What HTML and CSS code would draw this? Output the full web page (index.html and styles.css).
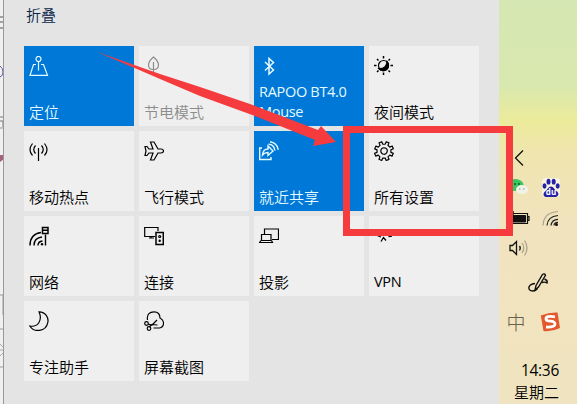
FILE: index.html
```
<!DOCTYPE html>
<html lang="zh-CN">
<head>
    <meta charset="UTF-8">
    <meta name="viewport" content="width=device-width, initial-scale=1.0">
    <title>操作中心</title>
    <link rel="stylesheet" href="styles.css">
</head>
<body>
    <div class="screen">
        <div class="window-edge">
            <svg width="5" height="404" viewBox="0 0 5 404" fill="none">
                <path d="M0 17h3M0 22h3M0 28h3" stroke="#555"/>
                <path d="M0 66q3 2 3 6t-3 5" stroke="#6a55a5"/>
                <path d="M0 117h3M0 121h3v6" stroke="#777"/>
                <path d="M0 128h3M0 295h3v20M0 329h3M0 367h3" stroke="#999"/>
                <path d="M0 155h4v4l-4 3z" fill="#a4627e"/>
                <path d="M0 344l3 3M0 350h3M0 356l3-3" stroke="#aaa"/>
            </svg>
        </div>
        <main class="panel">
            <a class="collapse">折叠</a>
            <div class="tiles">
                <div class="tile on">
                    <svg class="icon" viewBox="0 0 20 20"><circle cx="9.500" cy="3" r="2.500"/><path d="M9.500 5.500v9M7 8.500H4.500L1 19.300h17.500L14.500 8.500H12"/></svg>
                    <span>定位</span>
                </div>
                <div class="tile disabled">
                    <svg class="icon" viewBox="0 0 20 20"><path d="M9.500 1C6 4 4.500 6 4.500 9c0 3 2 4.500 5 4.500s5-1.500 5-4.500c0-3-1.500-5-5-8zM9.500 6v12"/></svg>
                    <span>节电模式</span>
                </div>
                <div class="tile on">
                    <svg class="icon" viewBox="0 0 20 20"><path d="M6 6l8.500 8-4.500 4V2.500l4.500 4L6 14.500" stroke-width="1.500"/></svg>
                    <span class="latin">RAPOO BT4.0<br>Mouse</span>
                </div>
                <div class="tile">
                    <svg class="icon" viewBox="0 0 20 20"><circle cx="9.500" cy="9.500" r="5"/><path d="M13 5.500a5.500 5.500 0 1 1-8.300 7.200C10 13 13 10 13 5.500z" fill="#000"/><path d="M9.500 0v2.500M9.500 16.500V19M0 9.500h2.500M16.500 9.500H19M3 3l1.500 1.500M14.500 14.500L16 16M3 16l1.500-1.500M14.500 4.500L16 3" stroke-width="1.500"/></svg>
                    <span>夜间模式</span>
                </div>
                <div class="tile">
                    <svg class="icon" viewBox="0 0 20 20"><path d="M9.500 7v13M3.500 2.500q-5 6.500 0 12M15.500 2.500q5 6.500 0 12M6.500 4.500q-3.500 4 0 8M12.500 4.500q3.500 4 0 8"/></svg>
                    <span>移动热点</span>
                </div>
                <div class="tile">
                    <svg class="icon" viewBox="0 0 20 20"><path d="M1 5.500h2L5 8h4L6.500 1H10l4 7h3q2.500 0 2.500 2T17 12h-3l-4 7H6.500L9 12H5l-2 2.500H1L2 10z"/></svg>
                    <span>飞行模式</span>
                </div>
                <div class="tile on">
                    <svg class="icon" viewBox="0 0 20 20"><path d="M3 7H.7v11.500H12V16M3.500 14Q4 8 9 8V5l5 5-5 4.500v-3q-3.500 0-5.500 2.500zM9.500 3.200q5.500 0 6.500 6.300M11 .8q7 1 8.300 8" stroke-width="1.400"/></svg>
                    <span>就近共享</span>
                </div>
                <div class="tile">
                    <svg class="icon" viewBox="0 0 20 20"><g transform="rotate(22.500 10 10)"><circle cx="10" cy="10" r="3.200"/><path d="M8.500 3.200V.6h3v2.600l2.300 1 1.900-1.900 2.100 2.100-1.900 1.900 1 2.300h2.600v3h-2.600l-1 2.300 1.900 1.900-2.100 2.100-1.900-1.900-2.300 1v2.600h-3V17l-2.300-1-1.900 1.900-2.100-2.100 1.900-1.900-1-2.300H.6v-3h2.600l1-2.300-1.900-1.900 2.100-2.100 1.900 1.900z" stroke-linejoin="round"/></g></svg>
                    <span>所有设置</span>
                </div>
                <div class="tile">
                    <svg class="icon" viewBox="0 0 20 20"><path d="M1 19.500C1 12 5 7.500 12 6.500M5 19.500c0-5 3-8 8-8.500M9 19.500q0-4 4.500-4.500M16.500 8.500v11" stroke-width="1.400"/><path d="M13.500 1.500h5.500v6h-5.500zM14 4.300h5" stroke-width="1.500"/><circle cx="13" cy="18.300" r="1.200" fill="#000" stroke="none"/></svg>
                    <span>网络</span>
                </div>
                <div class="tile">
                    <svg class="icon" viewBox="0 0 20 20"><path d="M14 5V1.500H.7v9H11M5 12h5M7 10.500V12"/><path d="M12 6.500h7.300v12H12z" stroke-width="1.500"/><circle cx="15.700" cy="10.500" r="1" /><circle cx="15.700" cy="14.800" r=".6" fill="#000"/></svg>
                    <span>连接</span>
                </div>
                <div class="tile">
                    <svg class="icon" viewBox="0 0 20 20"><path d="M5.500 8V3h14v10.500H13M2.500 8.500h9.500v6H2.500zM2 14.500l-1.500 2h13l-1-2"/></svg>
                    <span>投影</span>
                </div>
                <div class="tile">
                    <svg class="icon" viewBox="0 0 20 20"><path d="M2 9l5 2M7 15.500l2.500-4 2.500 3M14.500 10.500l3.500-.5" stroke-width="1.300"/></svg>
                    <span class="latin">VPN</span>
                </div>
                <div class="tile">
                    <svg class="icon" viewBox="0 0 20 20"><path d="M10 .8c7 0 10 6.500 8.700 11C17 20.500 5 22 .8 15c8 1.500 13-5.500 9.200-14.200z"/></svg>
                    <span>专注助手</span>
                </div>
                <div class="tile">
                    <svg class="icon" viewBox="0 0 20 20"><path d="M3.500 9C2.500 3 6 .8 10 .8c4 0 6 2 6 6.200 5 2.500 4.500 9-.500 10H9.500M4 13l4 1 5-5M5 16l3-2.500 5.500.5"/><circle cx="2.500" cy="12.500" r="1.800"/><circle cx="5" cy="17.500" r="1.800"/></svg>
                    <span>屏幕截图</span>
                </div>
            </div>
        </main>
        <aside class="taskbar">
            <div class="tray">
                <svg width="20" height="20" viewBox="0 0 20 20" fill="none" stroke="#111" stroke-width="1.300"><path d="M16 2.500L8.500 10l7.500 7.500"/></svg>
                <i></i>
                <svg width="26" height="20" viewBox="0 0 26 20"><ellipse cx="11" cy="7" rx="8.500" ry="6" fill="#35c65d"/><path d="M5 10v5l5-3z" fill="#35c65d"/><ellipse cx="18" cy="11.500" rx="6" ry="4.500" fill="#f0f4e8"/><path d="M10 6h2M14 6h2" stroke="#145c2b" stroke-width="1.500"/><path d="M15 11h1.500M19 11h1.500" stroke="#888"/></svg>
                <svg width="20" height="20" viewBox="0 0 20 20"><rect x="1" width="18" height="19" rx="4" fill="#fff" fill-opacity=".6"/><g fill="#2422a6"><ellipse cx="3.500" cy="8" rx="2" ry="2.700"/><ellipse cx="7.500" cy="3.700" rx="2" ry="2.900"/><ellipse cx="12.700" cy="3.700" rx="2" ry="2.900"/><ellipse cx="16.700" cy="8" rx="2" ry="2.700"/><path d="M10 8.500c2.500 0 3.500 3 5.500 4.500 4 3 1 6.500-2 6H6.500c-4 .500-5.500-3.500-2-6C6.500 11.500 7.500 8.500 10 8.500z"/></g><text class="du" x="10" y="17">du</text></svg>
                <svg width="26" height="20" viewBox="0 0 26 20" fill="none" stroke="#111"><path d="M6 5.500h17.500v10H6zM23.500 8.500H25v4h-1.500" stroke-width="1.200"/><path d="M8 7.500h13.500v6.500H8z" fill="#111"/><path d="M5 3v4h4V3" stroke-width="1.400"/></svg>
                <svg width="20" height="20" viewBox="0 0 20 20" fill="none" stroke-width="1.200"><path d="M2 17.500C2.500 8.500 8 4 17 3.500" stroke="#aaa58c"/><path d="M6 17.500C6.500 11.500 11 8 17 7.500M10 17.500c.5-4 3-6 7-6.200M13 17.500q0-3 4-3.200" stroke="#222"/><circle cx="15.500" cy="16.500" r="1.500" fill="#111"/></svg>
                <svg width="22" height="20" viewBox="0 0 22 20" fill="none" stroke="#111" stroke-width="1.300"><path d="M4 7.500h2.500l4-4v13l-4-4H4z"/><path d="M13.500 8q1.500 2 0 4.500"/><path d="M16 5q3.500 5 0 10M18.500 2.500q5 7.500 0 15" stroke="#aaa58c"/></svg>
                <i></i>
            </div>
            <svg class="pen" width="22" height="22" viewBox="0 0 22 22" fill="none" stroke="#111" stroke-width="1.400"><path d="M8 18L9 13.500 15.500 2.500q2-1.500 3 .8L11.500 15z"/><path d="M8 11.500c-4 0-7 3-6 5.500s6 3 8.500-.5M15 10.500q3-1 5 .5 1-2.500-2.500-4"/></svg>
            <div class="tray ime">
                <span class="zhong">中</span>
                <svg width="20" height="20" viewBox="0 0 20 20" fill="none"><path d="M.8 3.500Q10 0 17.500.5L20 16Q12 20 3.500 19z" fill="#e3582c"/><path d="M15 4.800Q5.500 3.500 6 7q.3 2 4.500 2.200 4.700.3 4.500 3-.5 3.300-9 2.800" stroke="#fff" stroke-width="2.800"/></svg>
            </div>
            <div class="clock"><span class="latin">14:36</span><br>星期二</div>
        </aside>
        <svg class="marker" width="577" height="404" viewBox="0 0 577 404">
            <path d="M96 51.500L130 63.500 160 74 200 87 250 104 318 130 321 126 336 142 313 146 315 140 255 116 200 96 160 79 130 66z" fill="#f53b3d"/>
            <rect x="346.500" y="129.500" width="163" height="103" fill="none" stroke="#f53b3d" stroke-width="7"/>
        </svg>
    </div>
</body>
</html>
```
FILE: styles.css
```
body {
    margin: 0;
    font-family: "Noto Sans CJK SC", sans-serif;
    font-size: 15px;
    font-weight: 350;
    color: #000;
}
.screen {
    position: relative;
    display: grid;
    grid-template-columns: 4px 495px 78px;
    height: 404px;
    overflow: hidden;
}
.window-edge {
    background: #f0f0f0;
    border-right: 1px solid #999;
    box-sizing: border-box;
    overflow: hidden;
}
.panel {
    background: #e4e4e4;
    padding: 4px 20px 0;
}
.collapse {
    display: block;
    height: 42px;
    padding-left: 2px;
    line-height: 21px;
    color: #08264a;
}
.tiles {
    display: grid;
    grid-template-columns: repeat(4, 110px);
    grid-auto-rows: 80px;
    gap: 5px;
}
.tile {
    display: flex;
    flex-direction: column;
    justify-content: space-between;
    align-items: flex-start;
    box-sizing: border-box;
    padding: 10px 0 4px 5px;
    background: #efefef;
    line-height: 20px;
    white-space: nowrap;
}
.tile.on {
    background: #0078d7;
    color: #e4fbff;
}
.tile.disabled {
    color: #8c8c8c;
}
.latin {
    font-family: "Open Sans", sans-serif;
    font-size: 14.5px;
    font-weight: 400;
    letter-spacing: -0.3px;
}
.icon {
    width: 20px;
    height: 20px;
    flex: none;
    margin-bottom: -20px;
    fill: none;
    stroke: currentColor;
    stroke-width: 1.2;
}
.taskbar {
    display: flex;
    flex-direction: column;
    background: linear-gradient(#d5e7b3, #d9e8ae 85px, #eceb9b 122px, #efe5ad 150px, #f1e3bd 220px, #f0e4c0);
}
.tray {
    display: grid;
    grid-template-columns: 34px 34px;
    grid-auto-rows: 30px;
    align-items: center;
    justify-items: center;
    margin: 143px 0 0 1px;
}
.pen {
    margin: 9px 0 0 28px;
}
.ime {
    margin: 13px 0 0;
}
.du {
    font: bold 8px "Open Sans", sans-serif;
    fill: #fff;
    text-anchor: middle;
}
.zhong {
    font: 300 19px/28px "Noto Sans CJK SC", sans-serif;
    color: #66614f;
}
.clock {
    margin-top: 22px;
    padding-right: 18px;
    text-align: right;
    line-height: 22px;
}
.clock .latin {
    font-size: 15.5px;
}
.marker {
    position: absolute;
    left: 0;
    top: 0;
}
```
